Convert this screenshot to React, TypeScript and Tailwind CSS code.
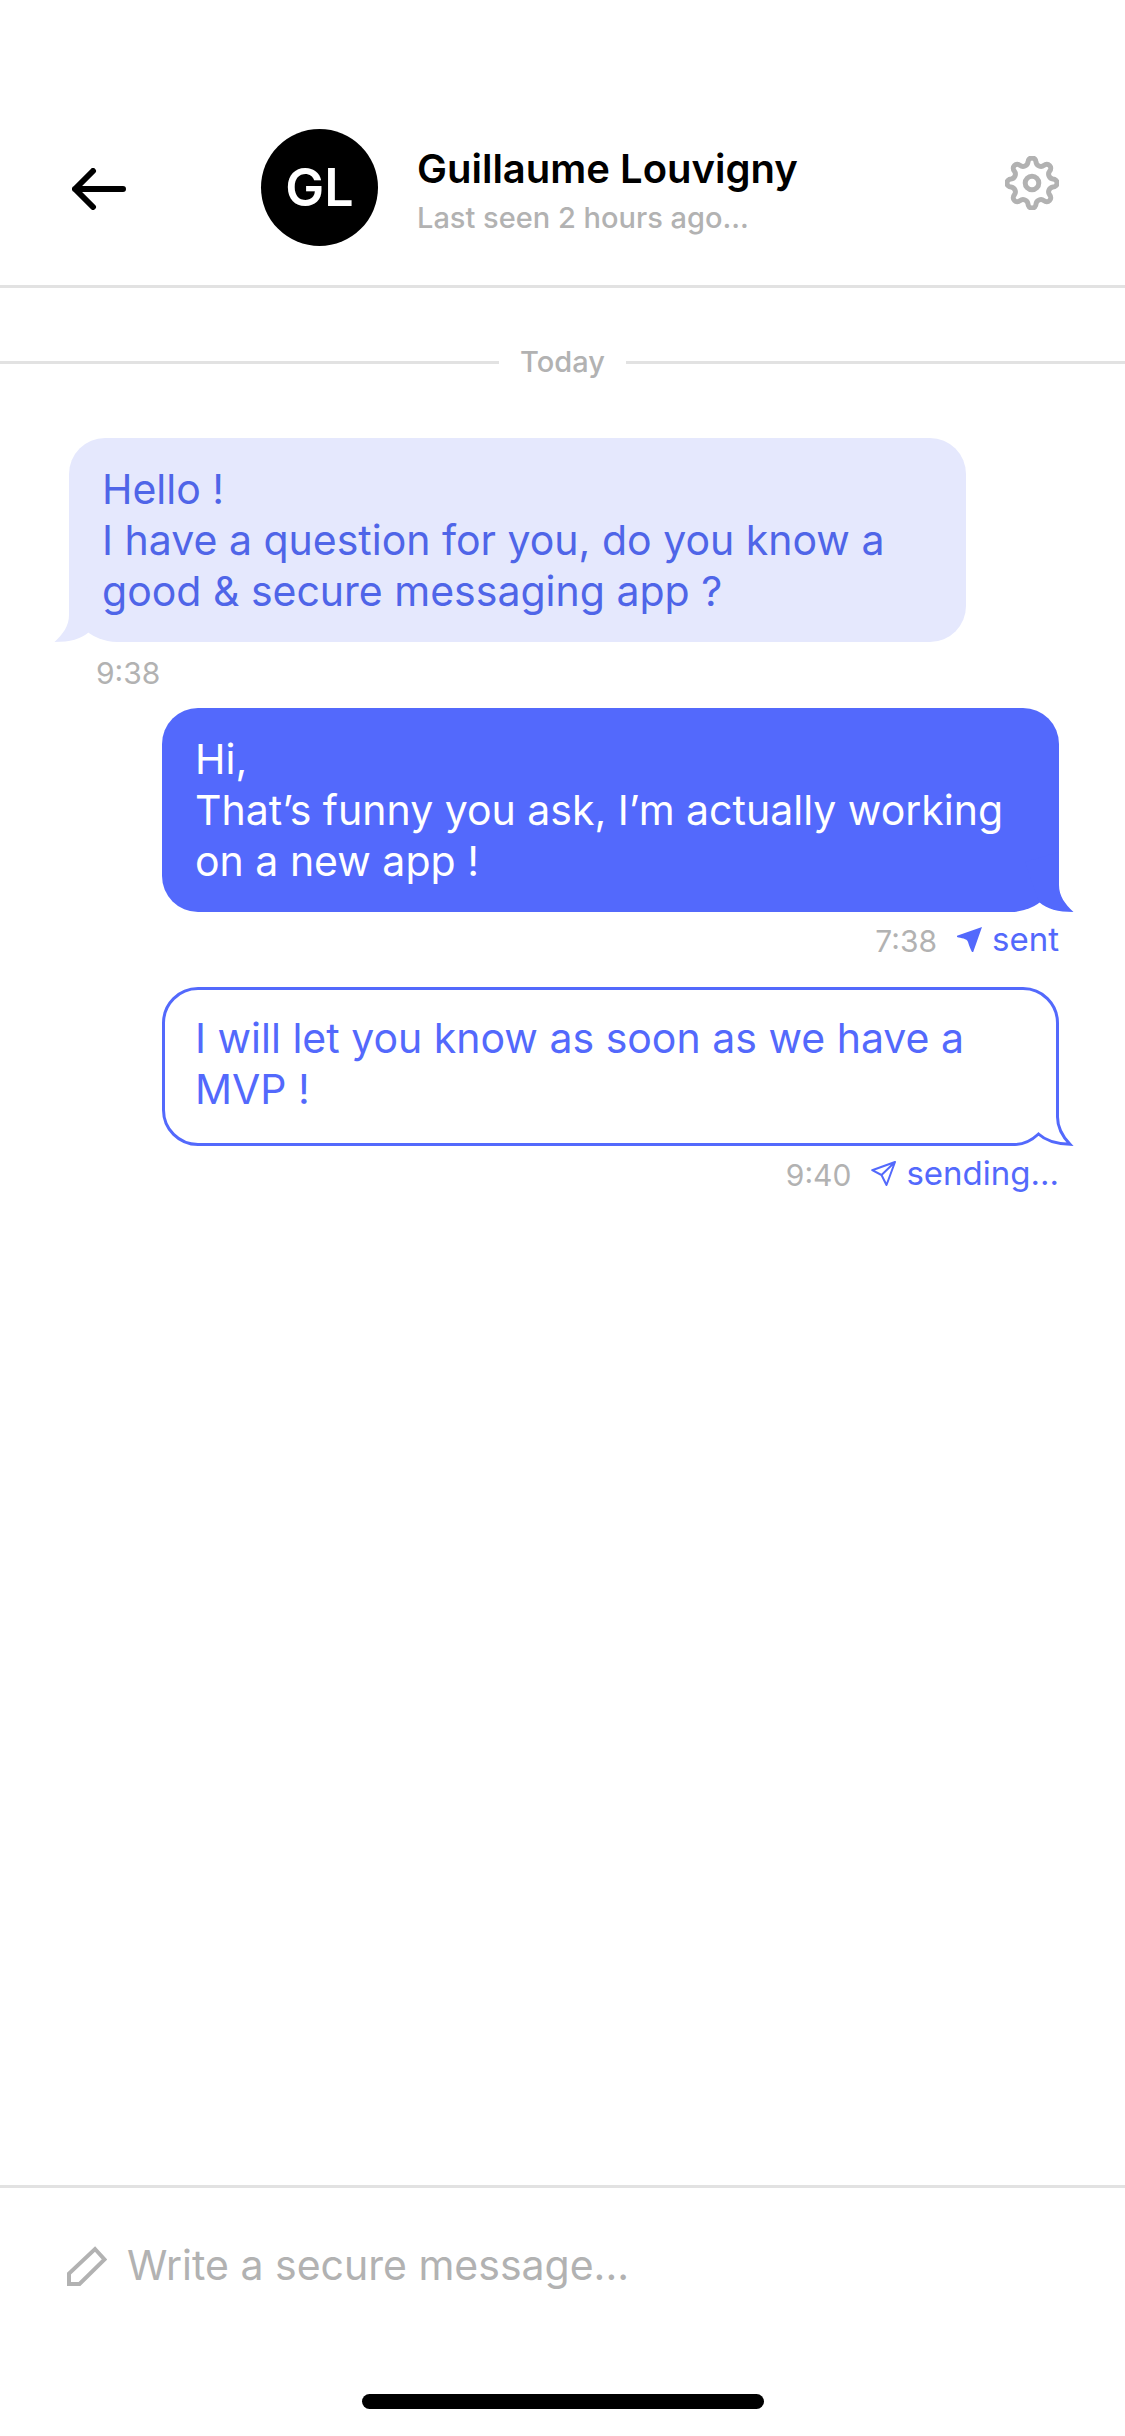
import type { ReactNode } from "react";

const point = (radius: number, degrees: number) => {
  const a = (degrees * Math.PI) / 180;
  return { x: 27 + radius * Math.sin(a), y: 27 - radius * Math.cos(a) };
};

/** Outline of an eight-lobed cog: lobes and valleys are tangent circular arcs. */
function cogPath() {
  const lobe = 4;
  const valley = 5;
  const touch = (lobeAngle: number, valleyAngle: number) => {
    const c = point(20.5, lobeAngle);
    const v = point(23.5, valleyAngle);
    const k = lobe / (lobe + valley);
    return `${(c.x + (v.x - c.x) * k).toFixed(2)} ${(c.y + (v.y - c.y) * k).toFixed(2)}`;
  };
  const parts = [`M${touch(0, -22.5)}`];
  for (let i = 0; i < 8; i++) {
    const angle = i * 45;
    parts.push(`A${lobe} ${lobe} 0 0 1 ${touch(angle, angle + 22.5)}`);
    parts.push(`A${valley} ${valley} 0 0 0 ${touch(angle + 45, angle + 22.5)}`);
  }
  return parts.join("") + "Z";
}

function ArrowIcon() {
  return (
    <svg className="h-[42px] w-[54px]" viewBox="0 0 54 42" fill="none" stroke="currentColor" strokeWidth="6" strokeLinecap="round" strokeLinejoin="round" aria-hidden="true">
      <path d="M51 21H3M21 3 3 21l18 18" />
    </svg>
  );
}

function CogIcon() {
  return (
    <svg className="size-[54px]" viewBox="0 0 54 54" fill="none" stroke="currentColor" strokeWidth="5" aria-hidden="true">
      <path d={cogPath()} />
      <circle cx="27" cy="27" r="6.8" />
    </svg>
  );
}

function PencilIcon() {
  return (
    <svg className="size-[40px] shrink-0" viewBox="0 0 40 40" fill="none" stroke="currentColor" strokeWidth="4" aria-hidden="true">
      <path d="M28 3 37.5 13.5 12.5 38H2V27.5Z" />
    </svg>
  );
}

function SentIcon() {
  return (
    <svg className="size-[25px]" viewBox="0 0 25 25" fill="currentColor" aria-hidden="true">
      <path d="M25 0 0 8.7V10c4 1.200 10 1.400 11 5 1 3.600 2.800 8 4 10h1.200Z" />
    </svg>
  );
}

function SendingIcon() {
  return (
    <svg className="size-[25px]" viewBox="0 0 25 25" fill="none" stroke="currentColor" strokeWidth="2" strokeLinejoin="round" aria-hidden="true">
      <path d="M24 1 1.200 9.200 10.500 14 15.500 24ZM24 1 10.500 14" />
    </svg>
  );
}

function Tail({ outlined = false, className }: { outlined?: boolean; className: string }) {
  return (
    <svg className={`absolute h-[60px] w-[60px] ${className}`} viewBox="0 0 60 60" aria-hidden="true">
      {outlined ? (
        <>
          <path d="M0 0H44V60H0Z" fill="#fff" />
          <path d="M42.500 0V31C42.500 42 48 51 55 58.300 42 58 31 55 23.500 48 16 55 8 58.500 0 58.500" fill="none" stroke="currentColor" strokeWidth="3" />
        </>
      ) : (
        <path d="M44 0V33C44 44 50 52 58.500 60 43 60 32 57 24 50L10 10Z" fill="currentColor" />
      )}
    </svg>
  );
}

function Meta({ time, children }: { time: string; children?: ReactNode }) {
  return (
    <div className="flex items-baseline gap-[20px] leading-[39px]">
      <time className="text-[30px] text-[#b2b2b2]">{time}</time>
      {children}
    </div>
  );
}

function Status({ icon, label }: { icon: ReactNode; label: string }) {
  return (
    <span className="flex items-center gap-[10px] text-[33px] text-[#5369fc]">
      {icon}
      {label}
    </span>
  );
}

export default function App() {
  return (
    <div className="flex min-h-screen flex-col bg-white font-['Inter',sans-serif]">
      <header className="flex items-start border-b-[3px] border-[#e2e2e2] pt-[129px] pr-[66px] pb-[39px] pl-[72px]">
        <button type="button" aria-label="Back" className="mt-[39px] text-black">
          <ArrowIcon />
        </button>
        <div className="ml-[135px] flex size-[117px] shrink-0 items-center justify-center rounded-full bg-black text-[52px] font-semibold text-white">GL</div>
        <div className="ml-[39px] flex flex-1 flex-col gap-[7px] pt-[16px]">
          <h1 className="text-[40px] leading-[48px] font-semibold text-black">Guillaume Louvigny</h1>
          <p className="text-[29px] leading-[36px] font-medium text-[#b2b2b2]">Last seen 2 hours ago...</p>
        </div>
        <button type="button" aria-label="Settings" className="mt-[27px] text-[#b2b2b2]">
          <CogIcon />
        </button>
      </header>

      <main className="flex-1">
        <div className="flex items-center gap-[21px] pt-[56px] pb-[58px]">
          <div className="h-[3px] flex-1 bg-[#e2e2e2]" />
          <h2 className="text-[29px] leading-[36px] font-medium text-[#b2b2b2]">Today</h2>
          <div className="h-[3px] flex-1 bg-[#e2e2e2]" />
        </div>

        <ol className="flex flex-col pr-[66px] pl-[69px] text-[41px] leading-[51px]">
          <li className="w-full max-w-[897px]">
            <div className="relative rounded-[36px] rounded-bl-[48px] bg-[#e5e8fd] pt-[26px] pr-[34px] pb-[25px] pl-[33px] text-[#4f65e8]">
              <Tail className="bottom-0 -left-[16px] -scale-x-100 text-[#e5e8fd]" />
              <p className="relative">
                Hello !<br />I have a question for you, do you know a good &amp; secure messaging app ?
              </p>
            </div>
            <div className="mt-[12px] mb-[15px] ml-[27px]">
              <Meta time="9:38" />
            </div>
          </li>

          <li className="w-full max-w-[897px] self-end">
            <div className="relative rounded-[36px] rounded-br-[48px] bg-[#5369fc] pt-[26px] pr-[34px] pb-[25px] pl-[33px] text-white">
              <Tail className="-right-[16px] bottom-0 text-[#5369fc]" />
              <p className="relative">
                Hi,<br />That’s funny you ask, I’m actually working on a new app !
              </p>
            </div>
            <div className="mt-[8px] mb-[26px] flex justify-end">
              <Meta time="7:38">
                <Status icon={<SentIcon />} label="sent" />
              </Meta>
            </div>
          </li>

          <li className="w-full max-w-[897px] self-end">
            <div className="relative rounded-[36px] border-[3px] border-[#5369fc] pt-[23px] pr-[31px] pb-[28px] pl-[30px] text-[#5369fc]">
              <Tail outlined className="-right-[19px] -bottom-[3px]" />
              <p className="relative">I will let you know as soon as we have a MVP !</p>
            </div>
            <div className="mt-[8px] flex justify-end">
              <Meta time="9:40">
                <Status icon={<SendingIcon />} label="sending..." />
              </Meta>
            </div>
          </li>
        </ol>
      </main>

      <footer className="border-t-[3px] border-[#e2e2e2] px-[67px] pt-[52px] pb-[27px]">
        <label className="flex items-center gap-[20px] text-[#b2b2b2]">
          <PencilIcon />
          <input
            type="text"
            aria-label="Message"
            placeholder="Write a secure message..."
            className="h-[51px] min-w-0 flex-1 bg-transparent text-[41px] leading-[51px] text-black outline-none placeholder:text-[#b2b2b2]"
          />
        </label>
        <div className="mx-auto mt-[103px] h-[15px] w-[402px] rounded-full bg-black" />
      </footer>
    </div>
  );
}
